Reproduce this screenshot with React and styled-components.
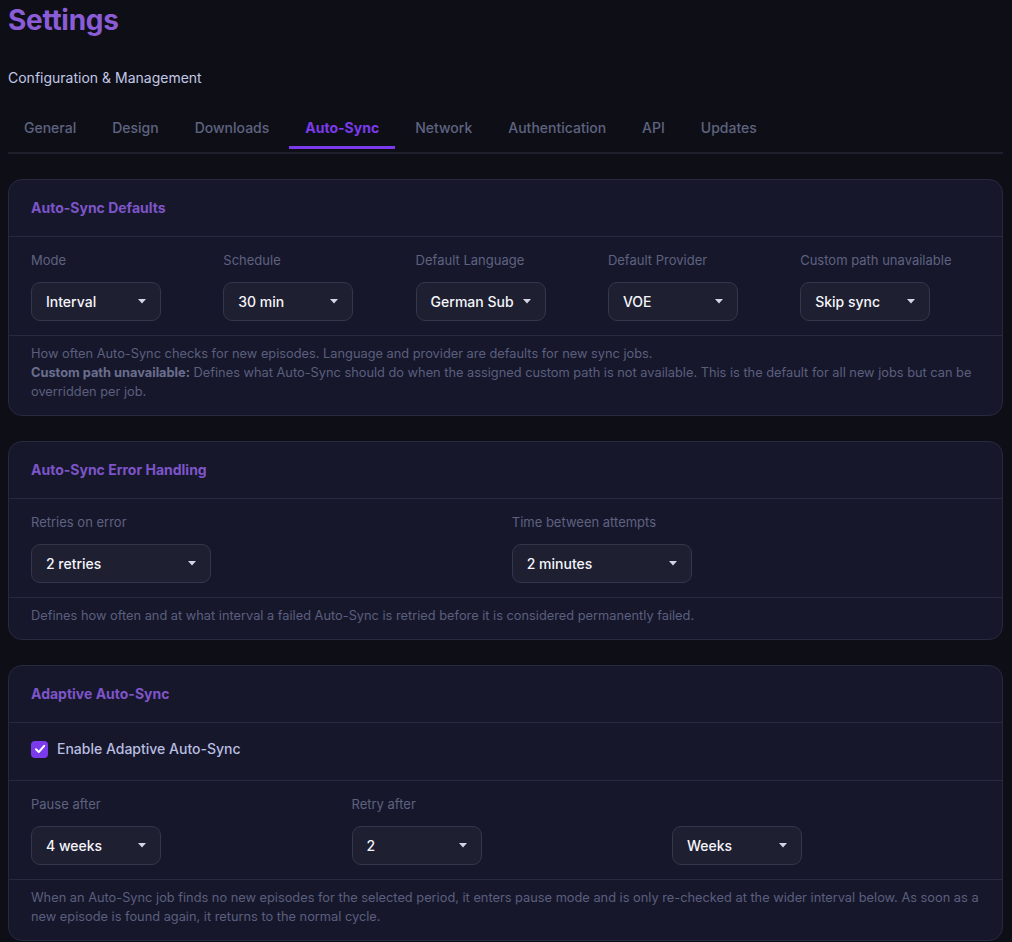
import React, { useState } from 'react';
import styled, { createGlobalStyle } from 'styled-components';

const GlobalStyle = createGlobalStyle`
  * { box-sizing: border-box; }
  body {
    margin: 0;
    background: #0e0f16;
    font-family: Inter, "Noto Sans", sans-serif;
    color: #e6e7f0;
  }
`;

const Page = styled.div`
  padding: 0 9px 0 8px;
`;

const Title = styled.h1`
  margin: 0;
  padding-top: 3px;
  font-size: 28px;
  line-height: 34px;
  font-weight: 700;
  color: #8a5cd6;
  letter-spacing: -0.3px;
`;

const Subtitle = styled.p`
  margin: 31px 0 0;
  font-size: 14px;
  line-height: 20px;
  color: #c3c8e6;
`;

const Tabs = styled.div`
  display: flex;
  gap: 4px;
  margin-top: 20px;
  padding-bottom: 3px;
  border-bottom: 2px solid #1e1f2a;
`;

const Tab = styled.button`
  background: none;
  border: none;
  border-bottom: 3px solid ${p => (p.$active ? '#7c3aed' : 'transparent')};
  padding: 10px 16px 8px;
  font-family: inherit;
  font-size: 14px;
  line-height: 20px;
  font-weight: ${p => (p.$active ? 700 : 500)};
  color: ${p => (p.$active ? '#7c3aed' : '#5f6380')};
  cursor: pointer;
`;

const Card = styled.section`
  margin-top: 25px;
  background: #16172b;
  border: 1px solid #272940;
  border-radius: 14px;
  overflow: hidden;
`;

const CardHeader = styled.div`
  padding: 18px 22px;
  border-bottom: 1px solid #272940;
  font-size: 14px;
  line-height: 20px;
  font-weight: 700;
  color: #7d55c8;
`;

const CardBody = styled.div`
  display: grid;
  grid-template-columns: repeat(${p => p.$cols}, 1fr);
  column-gap: 12.5px;
  padding: 15px 22px 14px;
  border-bottom: 1px solid #272940;
`;

const CheckRow = styled.label`
  display: flex;
  align-items: center;
  gap: 9px;
  padding: 16px 22px 21px;
  border-bottom: 1px solid #272940;
  font-size: 14px;
  line-height: 20px;
  font-weight: 500;
  color: #b9bde0;
  cursor: pointer;
`;

const CheckBox = styled.span`
  width: 17px;
  height: 17px;
  border-radius: 4px;
  background: #7c3aed;
  display: flex;
  align-items: center;
  justify-content: center;
`;

const Field = styled.div`
  display: flex;
  flex-direction: column;
`;

const Label = styled.span`
  font-size: 13px;
  line-height: 16px;
  color: #5e6280;
  margin-bottom: 14px;
`;

const Select = styled.button`
  display: flex;
  align-items: center;
  justify-content: space-between;
  width: ${p => p.$w}px;
  height: 39px;
  padding: 0 14px;
  background: #1e1f30;
  border: 1px solid #34364c;
  border-radius: 9px;
  font-family: inherit;
  font-size: 14px;
  font-weight: 500;
  color: #f4f5fb;
  cursor: pointer;
`;

const Footer = styled.div`
  padding: 8px 22px 14px;
  font-size: 12.8px;
  line-height: 19px;
  color: #5b5f7e;

  b {
    font-weight: 700;
    color: #6a6e8e;
  }
`;

const Caret = () => (
  <svg width="8" height="5" viewBox="0 0 8 5">
    <path d="M0 0H8L4 4.5Z" fill="#d4d6e4" />
  </svg>
);

const Check = () => (
  <svg width="12" height="12" viewBox="0 0 12 12" fill="none">
    <path d="M2 6.3L4.8 9L10.2 2.8" stroke="#fff" strokeWidth="2" strokeLinecap="round" strokeLinejoin="round" />
  </svg>
);

const Dropdown = ({ label, value, width = 130 }) => (
  <Field>
    <Label>{label || '\u00a0'}</Label>
    <Select $w={width}>
      <span>{value}</span>
      <Caret />
    </Select>
  </Field>
);

const tabs = ['General', 'Design', 'Downloads', 'Auto-Sync', 'Network', 'Authentication', 'API', 'Updates'];

export default function App() {
  const [active, setActive] = useState('Auto-Sync');
  return (
    <Page>
      <GlobalStyle />
      <Title>Settings</Title>
      <Subtitle>Configuration &amp; Management</Subtitle>
      <Tabs>
        {tabs.map(t => (
          <Tab key={t} $active={t === active} onClick={() => setActive(t)}>
            {t}
          </Tab>
        ))}
      </Tabs>

      <Card>
        <CardHeader>Auto-Sync Defaults</CardHeader>
        <CardBody $cols={5}>
          <Dropdown label="Mode" value="Interval" />
          <Dropdown label="Schedule" value="30 min" />
          <Dropdown label="Default Language" value="German Sub" />
          <Dropdown label="Default Provider" value="VOE" />
          <Dropdown label="Custom path unavailable" value="Skip sync" />
        </CardBody>
        <Footer>
          How often Auto-Sync checks for new episodes. Language and provider are defaults for new sync jobs.
          <br />
          <b>Custom path unavailable:</b> Defines what Auto-Sync should do when the assigned custom path is not
          available. This is the default for all new jobs but can be overridden per job.
        </Footer>
      </Card>

      <Card>
        <CardHeader>Auto-Sync Error Handling</CardHeader>
        <CardBody $cols={2}>
          <Dropdown label="Retries on error" value="2 retries" width={180} />
          <Dropdown label="Time between attempts" value="2 minutes" width={180} />
        </CardBody>
        <Footer>
          Defines how often and at what interval a failed Auto-Sync is retried before it is considered permanently
          failed.
        </Footer>
      </Card>

      <Card>
        <CardHeader>Adaptive Auto-Sync</CardHeader>
        <CheckRow>
          <CheckBox>
            <Check />
          </CheckBox>
          Enable Adaptive Auto-Sync
        </CheckRow>
        <CardBody $cols={3}>
          <Dropdown label="Pause after" value="4 weeks" />
          <Dropdown label="Retry after" value="2" />
          <Dropdown value="Weeks" />
        </CardBody>
        <Footer>
          When an Auto-Sync job finds no new episodes for the selected period, it enters pause mode and is only
          re-checked at the wider interval below. As soon as a new episode is found again, it returns to the normal
          cycle.
        </Footer>
      </Card>
    </Page>
  );
}
